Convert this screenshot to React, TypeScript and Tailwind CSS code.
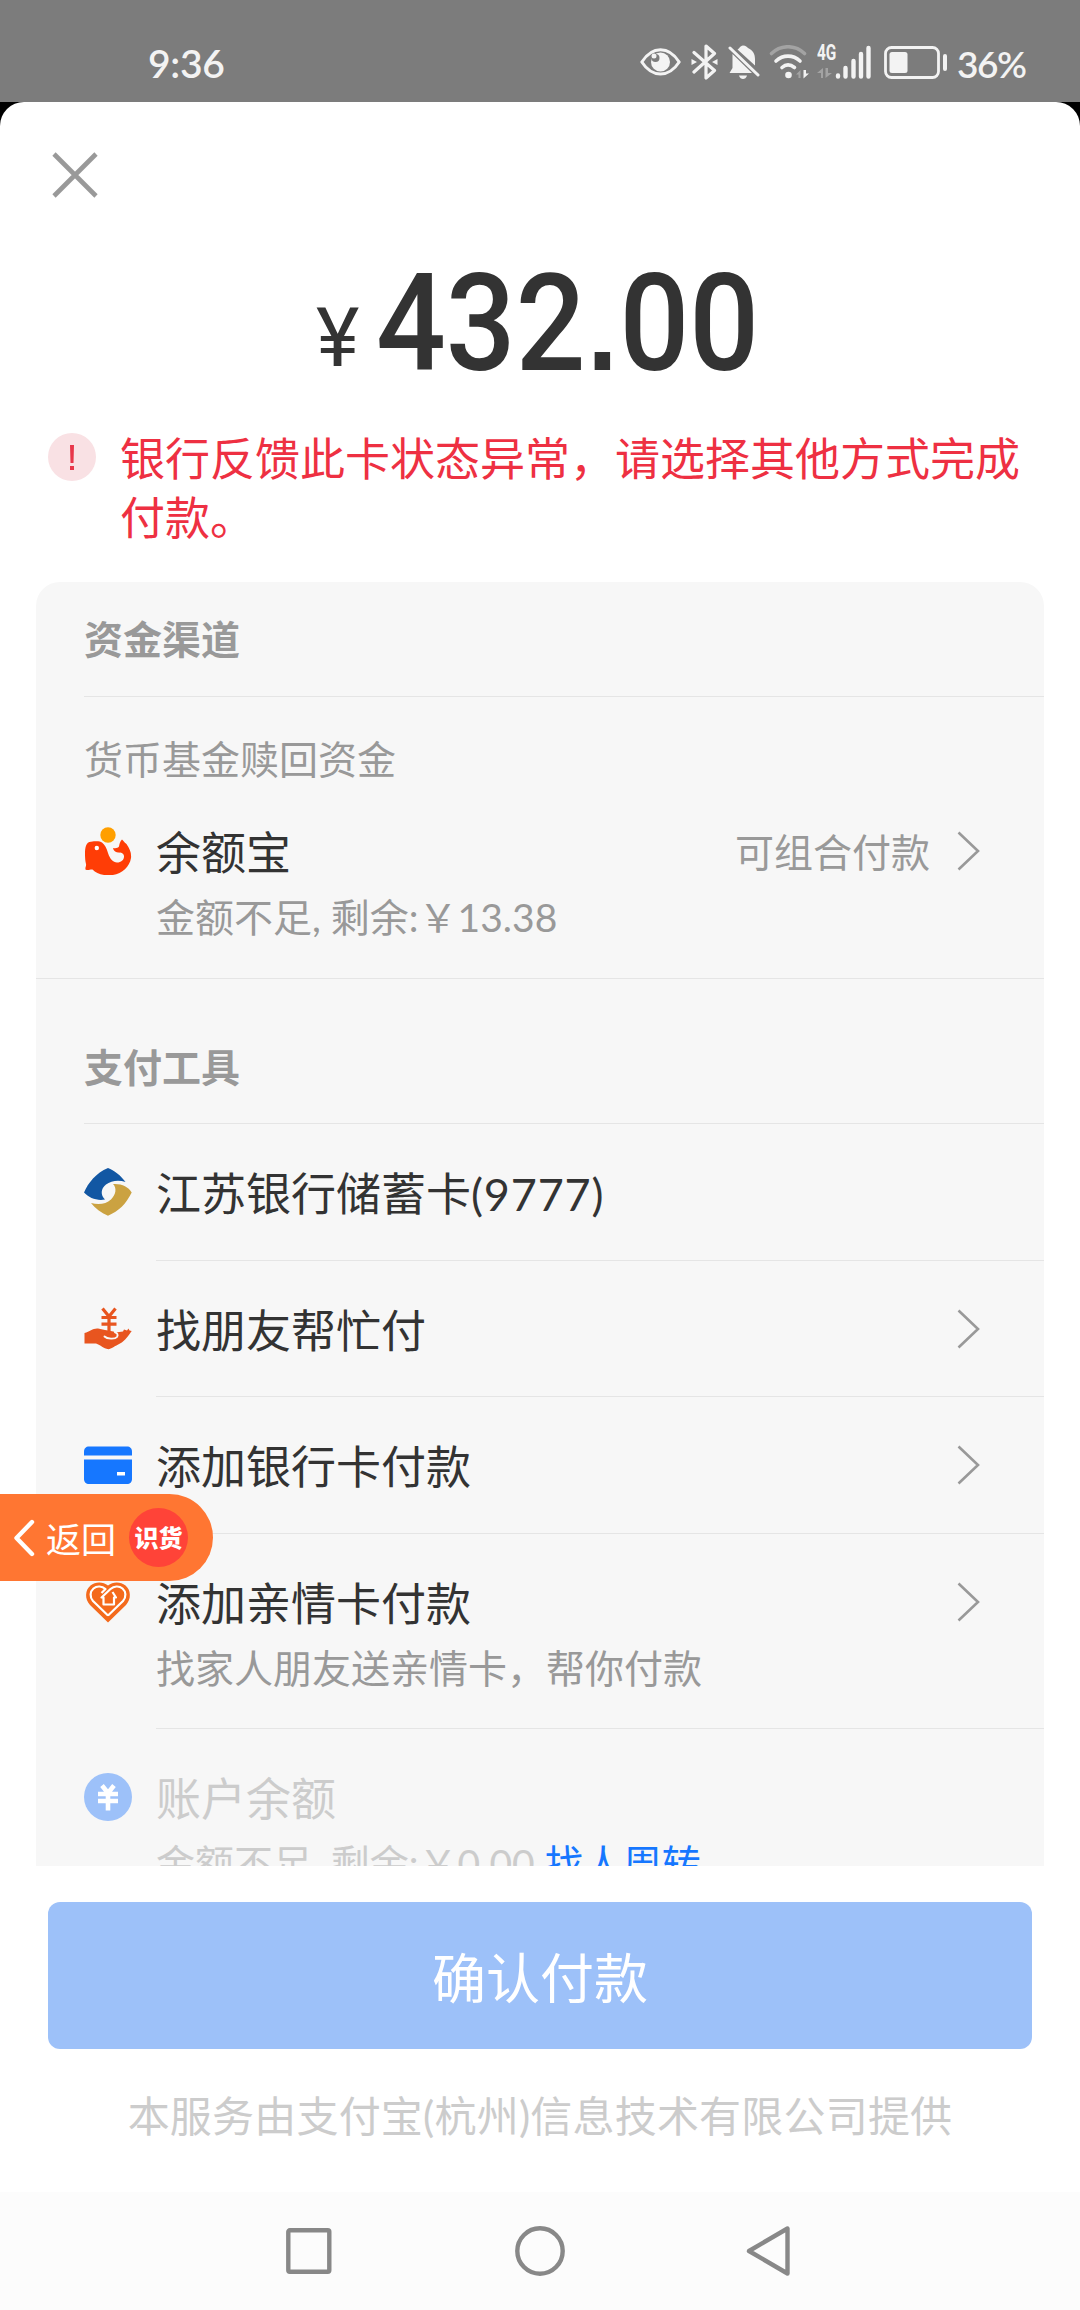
import type { ReactNode } from 'react';

function EyeIcon() {
  return (
    <svg className="w-[41px] h-[28px]" viewBox="0 0 41 28">
      <path d="M1.800 14C7 6 13 1.800 20.500 1.800S34 6 39.200 14C34 22 28 26 20.500 26S7 22 1.800 14Z" fill="none" stroke="#f3f3f3" strokeWidth="3" strokeLinejoin="round" />
      <circle cx="20.500" cy="14" r="9.500" fill="#f3f3f3" />
      <circle cx="15.500" cy="10" r="4" fill="#7c7c7c" />
      <circle cx="14" cy="8" r="2.500" fill="#f3f3f3" />
    </svg>
  );
}

function BluetoothIcon() {
  return (
    <svg className="w-[27px] h-[36px]" viewBox="0 0 27 36">
      <path d="M3 8.500 23.500 26.500 15 34V2L23.500 9.500 3 28" fill="none" stroke="#f3f3f3" strokeWidth="3.200" strokeLinecap="round" strokeLinejoin="round" />
      <path d="M0.500 15 6 18 0.500 21ZM26.500 15 21 18 26.500 21Z" fill="#f3f3f3" />
    </svg>
  );
}

function BellOffIcon() {
  return (
    <svg className="w-[32px] h-[34px]" viewBox="0 0 32 34">
      <path d="M4.500 9 24 28H1.500L4.500 23ZM9.500 4.500C11 4 12 1 15 .5 18 .5 19 2 20 3 25 5.500 27 9 27 14V20.500Z" fill="#f3f3f3" />
      <path d="M11 30.500H19C18.500 33 16.500 34 15 34S11.500 33 11 30.500Z" fill="#f3f3f3" />
      <path d="M2 3 30 30" stroke="#f3f3f3" strokeWidth="3" strokeLinecap="round" />
    </svg>
  );
}

function WifiIcon() {
  return (
    <svg className="w-[41px] h-[34px]" viewBox="0 0 41 34">
      <g fill="none" strokeWidth="3.600" strokeLinecap="round">
        <path d="M2.500 8.500C12-.5 26-.5 35.500 8.500" stroke="#a3a3a3" />
        <path d="M7 16C14 9.500 24 9.500 31 16M13 22.500C17 19 21 19 25.500 22.500" stroke="#f3f3f3" />
      </g>
      <circle cx="19.500" cy="30" r="3.300" fill="#f3f3f3" />
      <path d="M31.500 25V33H29.500V29.500H27Z" fill="#a3a3a3" />
      <path d="M34.500 25V33.500L40 28.500H37V25Z" fill="#f3f3f3" />
    </svg>
  );
}

function SignalIcon() {
  return (
    <div className="relative w-[54px] h-[36px]">
      <span className="absolute left-0 top-0 font-[Roboto,sans-serif] text-[22px] leading-[18px] font-bold origin-left scale-x-[0.7]">4G</span>
      <svg className="w-[54px] h-[36px]" viewBox="0 0 54 36">
        <path d="M6 24V34H4V29H0ZM8.500 24V34L15 29H11V24Z" fill="#a3a3a3" />
        <g stroke="#f3f3f3" strokeWidth="4.400" strokeLinecap="round">
          <path d="M21 32.500V31.500M28.500 32.500V24M36.500 32.500V17M44 32.500V10M51.500 32.500V4" />
        </g>
      </svg>
    </div>
  );
}

function BatteryIcon() {
  return (
    <svg className="w-[63px] h-[33px]" viewBox="0 0 63 33">
      <rect x="1.500" y="1.500" width="53" height="30" rx="6" fill="none" stroke="#f3f3f3" strokeWidth="2.800" />
      <rect x="5.500" y="6" width="18" height="21" rx="2.500" fill="#f3f3f3" />
      <rect x="59" y="8" width="4" height="17" rx="2" fill="#f3f3f3" />
    </svg>
  );
}

function FishIcon() {
  return (
    <svg className="w-12 h-12" viewBox="0 0 48 48">
      <circle cx="24" cy="8" r="7.700" fill="#ff9f00" />
      <path d="M1 27C1 20 2 15 7 14.700 12 14 16 14 18 15.500 21 18 22.500 21 24 26 26 32 29 35.500 33 35.500 37 35.500 40 33 40 29.500 40 26 37 25.500 34 25.500 31 25 29.500 23.500 29 21 32 21.500 34 21 35 19.500 35.500 17 36 14 38 12.500 39.500 13.500 40 15.500 42.500 17 46 22 47.500 26 47 31 45.500 41 36 48.500 24.500 48.300 17 48.300 12 46 8.500 42.500 6.500 42 4 44 1.500 42.500 1 40.500 2.500 39 2 37 1.300 34 1 31 1 27Z" fill="#ff3d06" />
      <circle cx="12.800" cy="21" r="2.200" fill="#fff" />
    </svg>
  );
}

function JiangsuBankIcon() {
  return (
    <svg className="w-12 h-12" viewBox="0 0 48 48">
      <path d="M24 0C30 2.500 37 7.500 41.500 14 35 11.500 27 12.500 22 16.500 16.500 21 16.500 27 21 31.500 13 33 5 30 0 24.500 4 15 12 5 24 0Z" fill="#1257a3" />
      <path d="M29 16C38 15.500 44 18.500 47.700 24.500 42 36 35 43 24 47.700 17 44.500 11 40.500 7 35 15 37 22 36 27 31.500 32 26.500 33 20 29 16Z" fill="#cba241" />
    </svg>
  );
}

function FriendPayIcon() {
  return (
    <svg className="w-12 h-12" viewBox="0 0 48 48">
      <path d="M18.500 3.500 25 11.500 31.500 3.500M25 11.500V26M17.500 12.500H32.500M17.500 19.200H32.500" fill="none" stroke="#e8551f" strokeWidth="3.200" />
      <path d="M0.500 28C6 26.500 9 23 14 23.500L21 25C25 26 29 25.500 31.500 27.500L39 26.500 40 24.500 43 25.500 44.500 23.500 45.500 25.500 47.700 26C45 30 41 36 36 38.500 31 41 27 44 24.500 44.200 19 43.500 17 40 12 38.500L0.500 38.500Z" fill="#e8551f" />
      <path d="M20.500 31.500C23 34 31 34.500 33 32 34.500 29.500 33 27.800 31 27.300" fill="none" stroke="#f8f8f8" strokeWidth="1.900" strokeLinecap="round" />
    </svg>
  );
}

function CardIcon() {
  return (
    <svg className="w-12 h-12" viewBox="0 0 48 48">
      <path d="M0 12.500V10.500C0 7.500 2 5.500 5 5.500H43C46 5.500 48 7.500 48 10.500V14.500H0Z" fill="#1677ff" />
      <path d="M0 18.500H48V38C48 41 46 43 43 43H5C2 43 0 41 0 38Z" fill="#1677ff" />
      <path d="M33 31H41V34.500H33Z" fill="#fff" />
    </svg>
  );
}

function HeartHouseIcon() {
  return (
    <svg className="w-12 h-12" viewBox="0 0 48 48">
      <path d="M24 44.500 6 27C.5 21 1 12 6.500 7.500 11.500 3.500 19 3.500 24 7.500 29 3.500 36.500 3.500 41.500 7.500 47 12 47.500 21 42 27Z" fill="#f46a1c" />
      <path d="M24 37.500 9 23C5.500 19 6 13.500 9.500 10.500 13 7.500 18 8 21.500 11L17.500 15M24 37.500 39 23C42.500 19 42 13.500 38.500 10.500 35 7.500 30 8 26.500 11L17.500 19.500H19.500V26.500H30V19.500H32L28.500 14" fill="none" stroke="#fff" strokeWidth="2.200" strokeLinejoin="round" />
    </svg>
  );
}

function BalanceIcon() {
  return (
    <svg className="w-12 h-12" viewBox="0 0 48 48">
      <circle cx="24" cy="24" r="24" fill="#9dc1f9" />
      <path d="M18 12.500 24 20 30 12.500M24 20V37.500M14 21H34M14 28H34" fill="none" stroke="#fff" strokeWidth="4.600" />
    </svg>
  );
}

function Chevron() {
  return (
    <svg className="w-[24px] h-[40px]" viewBox="0 0 24 40">
      <path d="M1.500 1.500 21 20 1.500 38.500" fill="none" stroke="#999" strokeWidth="2.600" />
    </svg>
  );
}

type ItemProps = {
  icon: ReactNode;
  title: string;
  cardNo?: string;
  sub?: string;
  link?: string;
  extra?: string;
  arrow?: boolean;
  disabled?: boolean;
  last?: boolean;
  className?: string;
};

function PayItem({ icon, title, cardNo, sub, link, extra, arrow, disabled, last, className }: ItemProps) {
  return (
    <div className={`flex pl-12 ${className ?? ''}`}>
      <div className="w-12 shrink-0 mr-6 pt-[44px]">{icon}</div>
      <div className={`flex-1 pt-10 ${last ? '' : 'border-b border-[#e5e5e5]'}`}>
        <div className="flex items-center pr-[63px]">
          <span className={`flex-1 text-[45px] leading-[60px] ${disabled ? 'text-[#ccc]' : 'text-[#333]'}`}>
            {title}
            {cardNo && <span className="tracking-[0.8px]">({cardNo})</span>}
          </span>
          {extra && <span className="-mt-[2px] text-[39px] leading-[60px] text-[#999] mr-[27px]">{extra}</span>}
          {arrow && <div className="-mt-1"><Chevron /></div>}
        </div>
        {sub && (
          <p className={`mt-[14px] text-[39px] leading-[40px] whitespace-pre ${disabled ? 'text-[#ccc]' : 'text-[#999]'}`}>
            {sub}
            {link && <span className="text-[#1677ff]">{link}</span>}
          </p>
        )}
      </div>
    </div>
  );
}

function StatusBar() {
  return (
    <header className="h-[102px] shrink-0 bg-[#7c7c7c] text-[#f3f3f3] flex items-start justify-between pl-[148px] pr-[54px] pt-11">
      <span className="-mt-px text-[39px] leading-[40px] font-semibold tracking-[-0.3px]">9:36</span>
      <div className="flex items-start">
        <div className="pt-1"><EyeIcon /></div>
        <div className="ml-[10px]"><BluetoothIcon /></div>
        <div className="ml-[10px] pt-px"><BellOffIcon /></div>
        <div className="ml-[9px] pt-px"><WifiIcon /></div>
        <div className="ml-[7px]"><SignalIcon /></div>
        <div className="ml-[13px] pt-[2px]"><BatteryIcon /></div>
        <span className="ml-[10px] w-[69px] text-[37px] leading-[40px] font-semibold tracking-[-1.500px] whitespace-nowrap">36%</span>
      </div>
    </header>
  );
}

function BackPill() {
  return (
    <div className="absolute left-0 top-[1494px] w-[213px] h-[87px] rounded-r-full bg-[#ff7632] text-white flex items-center">
      <svg className="ml-[12px] w-[24px] h-[40px]" viewBox="0 0 24 40">
        <path d="M20 4 4.500 20 20 36" fill="none" stroke="#fff" strokeWidth="4.400" strokeLinecap="round" strokeLinejoin="round" />
      </svg>
      <span className="ml-[10px] mt-[2px] text-[35px] leading-[40px]">返回</span>
      <div className="ml-[13px] size-[59px] rounded-full bg-[#ff4338] flex items-center justify-center text-[24px] leading-none font-black">识货</div>
    </div>
  );
}

export default function App() {
  return (
    <div className="relative w-[1080px] h-[2310px] bg-black overflow-hidden flex flex-col font-[Lato,'Noto_Sans_CJK_SC',sans-serif]">
      <StatusBar />

      <main className="flex-1 min-h-0 bg-white rounded-t-[24px] flex flex-col">
        <div className="pl-[52px] pt-[50px]">
          <svg className="w-[46px] h-[46px]" viewBox="0 0 46 46">
            <path d="M2 2 44 44M44 2 2 44" stroke="#999" strokeWidth="4.600" />
          </svg>
        </div>

        <div className="h-[132px] mt-[60px] flex items-baseline text-[#333] font-[Roboto,sans-serif] font-medium leading-[132px] pl-[316px]">
          <span className="w-[60px] text-[81px] font-normal leading-none mb-1 origin-left scale-x-[1.02] -translate-y-1">¥</span>
          <span className="text-[135px] origin-left scale-x-[0.91] whitespace-nowrap">
            432<span className="font-['Liberation_Sans',sans-serif] font-bold text-[120px] leading-none mx-[2px]">.</span>00
          </span>
        </div>

        <div className="mt-[36px] flex px-12 text-[#ee3042]">
          <div className="mt-[7px] mr-6 size-12 shrink-0 rounded-full bg-[#f9e1e4] flex items-center justify-center">
            <svg className="w-[6px] h-[25px]" viewBox="0 0 6 25">
              <path d="M1 0H5L4.500 18H1.500ZM1 21H5V25H1Z" fill="#e8374a" />
            </svg>
          </div>
          <p className="mt-1 text-[45px] leading-[59px]">银行反馈此卡状态异常，请选择其他方式完成<br />付款。</p>
        </div>

        <section className="mt-[34px] mx-9 h-[1284px] shrink-0 overflow-hidden rounded-t-[24px] bg-[#f7f7f7]">
          <h2 className="ml-12 h-[115px] border-b border-[#e5e5e5] text-[39px] leading-[115px] font-bold text-[#999]">资金渠道</h2>
          <div className="border-b border-[#e5e5e5] pb-[41px]">
            <p className="pl-12 pt-[42px] text-[39px] leading-[40px] text-[#999]">货币基金赎回资金</p>
            <PayItem icon={<FishIcon />} title="余额宝" sub="金额不足, 剩余:￥13.38" extra="可组合付款" arrow last className="mt-1 h-[154px]" />
          </div>
          <h2 className="ml-12 h-[145px] border-b border-[#e5e5e5] pt-[58px] text-[39px] leading-[60px] font-bold text-[#999]">支付工具</h2>
          <PayItem icon={<JiangsuBankIcon />} title="江苏银行储蓄卡" cardNo="9777" className="h-[137px]" />
          <PayItem icon={<FriendPayIcon />} title="找朋友帮忙付" arrow className="h-[136px]" />
          <PayItem icon={<CardIcon />} title="添加银行卡付款" arrow className="h-[137px]" />
          <PayItem icon={<HeartHouseIcon />} title="添加亲情卡付款" sub="找家人朋友送亲情卡，帮你付款" arrow className="h-[195px]" />
          <PayItem icon={<BalanceIcon />} title="账户余额" sub="金额不足, 剩余:￥0.00 " link="找人周转" disabled last className="h-[195px]" />
        </section>

        <button className="mt-9 mx-12 h-[147px] shrink-0 rounded-xl bg-[#9dc1f9] text-white text-[54px] leading-none pt-[6px]">确认付款</button>
        <p className="mt-[42px] text-center text-[42px] leading-[50px] tracking-[0.200px] text-[#ccc]">本服务由支付宝(杭州)信息技术有限公司提供</p>
      </main>

      <nav className="h-[118px] shrink-0 bg-[#fcfcfc] flex items-center justify-center gap-[180px]">
        <svg className="w-[50px] h-[50px]" viewBox="0 0 50 50">
          <rect x="3.300" y="4.300" width="41" height="41.500" rx="1.500" fill="none" stroke="#888" strokeWidth="4.400" />
        </svg>
        <svg className="w-[50px] h-[50px]" viewBox="0 0 50 50">
          <circle cx="25" cy="25" r="22.700" fill="none" stroke="#888" strokeWidth="4.400" />
        </svg>
        <svg className="w-[50px] h-[50px]" viewBox="0 0 50 50">
          <path d="M42.500 2.500V47.500L4 25Z" fill="none" stroke="#888" strokeWidth="4.400" strokeLinejoin="round" />
        </svg>
      </nav>

      <BackPill />
    </div>
  );
}
